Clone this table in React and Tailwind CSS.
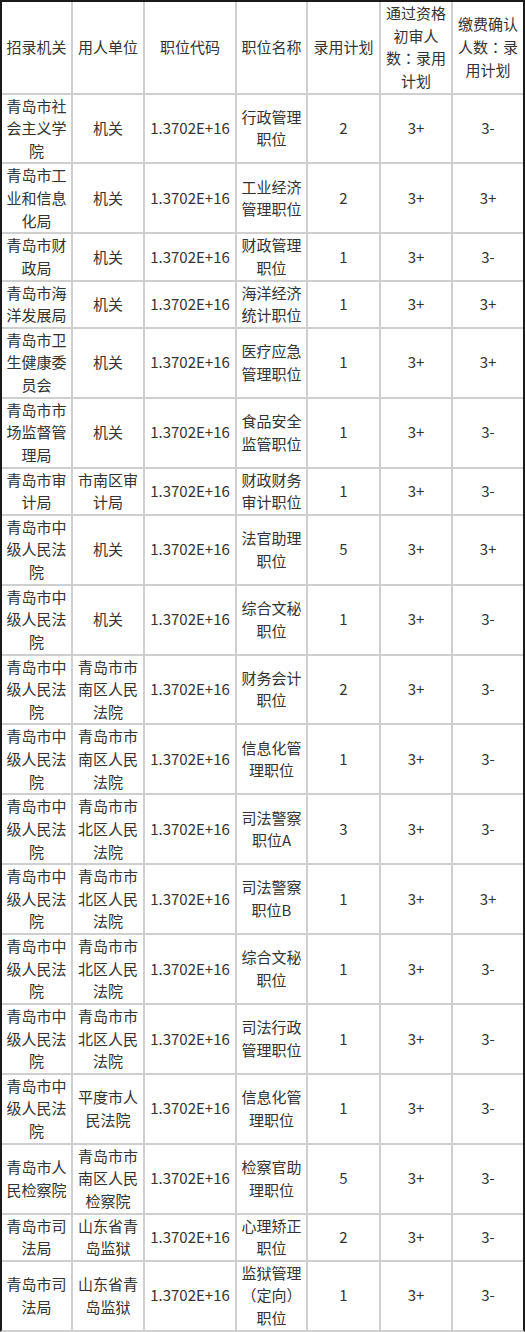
import React from 'react';

const HEADERS = ['招录机关', '用人单位', '职位代码', '职位名称', '录用计划', '通过资格初审人数：录用计划', '缴费确认人数：录用计划'];

const CODE = '1.3702E+16';

// [招录机关, 用人单位, 职位名称, 录用计划, 初审, 缴费]
const ROWS = [
  ['青岛市社会主义学院', '机关', '行政管理职位', '2', '3+', '3-'],
  ['青岛市工业和信息化局', '机关', '工业经济管理职位', '2', '3+', '3+'],
  ['青岛市财政局', '机关', '财政管理职位', '1', '3+', '3-'],
  ['青岛市海洋发展局', '机关', '海洋经济统计职位', '1', '3+', '3+'],
  ['青岛市卫生健康委员会', '机关', '医疗应急管理职位', '1', '3+', '3+'],
  ['青岛市市场监督管理局', '机关', '食品安全监管职位', '1', '3+', '3-'],
  ['青岛市审计局', '市南区审计局', '财政财务审计职位', '1', '3+', '3-'],
  ['青岛市中级人民法院', '机关', '法官助理职位', '5', '3+', '3+'],
  ['青岛市中级人民法院', '机关', '综合文秘职位', '1', '3+', '3-'],
  ['青岛市中级人民法院', '青岛市市南区人民法院', '财务会计职位', '2', '3+', '3-'],
  ['青岛市中级人民法院', '青岛市市南区人民法院', '信息化管理职位', '1', '3+', '3-'],
  ['青岛市中级人民法院', '青岛市市北区人民法院', '司法警察职位A', '3', '3+', '3-'],
  ['青岛市中级人民法院', '青岛市市北区人民法院', '司法警察职位B', '1', '3+', '3+'],
  ['青岛市中级人民法院', '青岛市市北区人民法院', '综合文秘职位', '1', '3+', '3-'],
  ['青岛市中级人民法院', '青岛市市北区人民法院', '司法行政管理职位', '1', '3+', '3-'],
  ['青岛市中级人民法院', '平度市人民法院', '信息化管理职位', '1', '3+', '3-'],
  ['青岛市人民检察院', '青岛市市南区人民检察院', '检察官助理职位', '5', '3+', '3-'],
  ['青岛市司法局', '山东省青岛监狱', '心理矫正职位', '2', '3+', '3-'],
  ['青岛市司法局', '山东省青岛监狱', '监狱管理（定向）职位', '1', '3+', '3-'],
];

// fullwidth punctuation sits centred in its em box in the original font
function Text({ value }) {
  return value.split(/([：（）])/).map((part, i) => {
    if (part === '：') {
      return <span key={i} className="font-['Noto_Sans_CJK_TC',sans-serif]">{part}</span>;
    }
    if (part === '（' || part === '）') {
      return <span key={i} className="inline-block w-[1em] text-center">{part}</span>;
    }
    return part;
  });
}

function Cell({ children }) {
  return (
    <div className="bg-white flex items-center justify-center text-center px-[4px] break-all">
      <span>{children}</span>
    </div>
  );
}

export default function App() {
  return (
    <div className="w-[525px] bg-[#cfcfcf] border-l-2 border-t-2 border-r-2 border-[#1a1a1a] border-b-2 border-b-[#cfcfcf] grid grid-cols-[69px_70px_90px_69px_71px_70px_70px] gap-[2px] font-['Noto_Sans_CJK_SC','Noto_Sans',sans-serif] text-[15px] leading-[22.63px] text-[#333]">
      {HEADERS.map(h => (
        <Cell key={h}><Text value={h} /></Cell>
      ))}
      {ROWS.map((r, i) => (
        <React.Fragment key={i}>
          <Cell>{r[0]}</Cell>
          <Cell>{r[1]}</Cell>
          <Cell>{CODE}</Cell>
          <Cell><Text value={r[2]} /></Cell>
          <Cell>{r[3]}</Cell>
          <Cell>{r[4]}</Cell>
          <Cell>{r[5]}</Cell>
        </React.Fragment>
      ))}
    </div>
  );
}
